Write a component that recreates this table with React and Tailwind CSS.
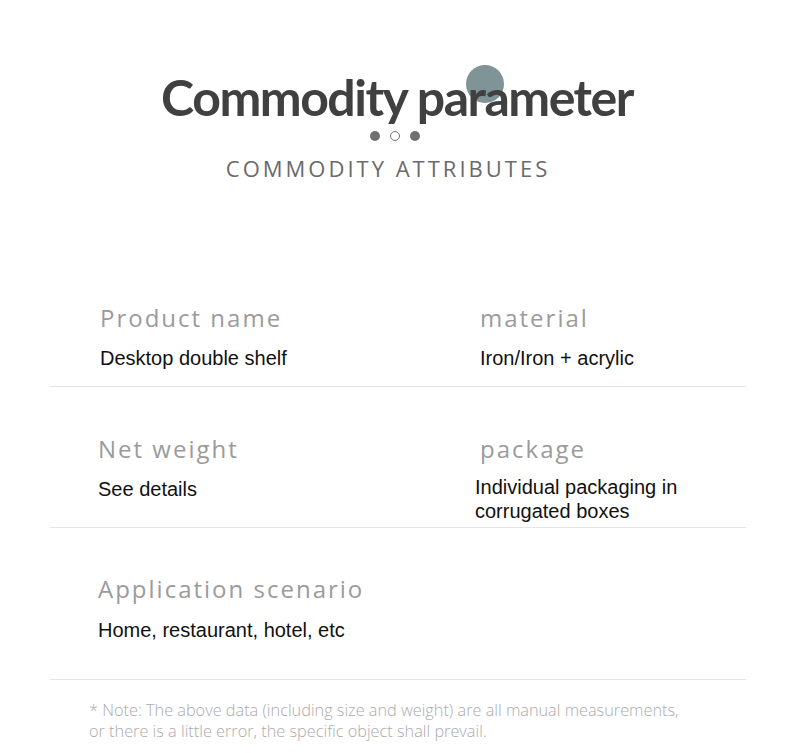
import React from 'react';

const rows = [
  {
    left: { label: 'Product name', value: ['Desktop double shelf'] },
    right: { label: 'material', value: ['Iron/Iron + acrylic'] },
    pad: 'pt-0 pb-[16px]',
    gap: 'mt-[13px]',
  },
  {
    left: { label: 'Net weight', value: ['See details'], nudge: true },
    right: { label: 'package', value: ['Individual packaging in', 'corrugated boxes'], shift: true },
    pad: 'pt-[47px] pb-[4px]',
    gap: 'mt-[13px]',
  },
  {
    left: { label: 'Application scenario', value: ['Home, restaurant, hotel, etc'], nudge: true },
    right: null,
    pad: 'pt-[46px] pb-[37px]',
    gap: 'mt-[14px]',
  },
];

function Cell({ item, gap }) {
  if (!item) return <div />;
  return (
    <div className={item.nudge ? '-ml-[2px]' : ''}>
      <div className="h-[30px] leading-[30px] text-[24px] tracking-[2px] text-[#9b9b9b] font-['Open_Sans',sans-serif]">
        {item.label}
      </div>
      <div
        className={`text-[20px] leading-[24px] text-[#111] font-['Liberation_Sans',sans-serif] ${
          item.shift ? '-ml-[5px] mt-[11px]' : gap
        }`}
      >
        {item.value.map((v) => (
          <div key={v}>{v}</div>
        ))}
      </div>
    </div>
  );
}

export default function App() {
  return (
    <div className="w-[790px] h-[753px] bg-white overflow-hidden">
      {/* Header */}
      <div className="pt-[67px] flex flex-col items-center">
        <div className="relative h-[60px] ml-[4px]">
          <div className="absolute left-[305px] top-[-2px] w-[38px] h-[38px] rounded-full bg-[#7f9497]" />
          <h1 className="relative text-[50px] leading-[60px] font-bold tracking-[-1.5px] text-[#404040] font-['Lato',sans-serif]">
            Commodity parameter
          </h1>
        </div>
        <div className="mt-[4px] flex items-center gap-[10px] h-[10px]">
          <span className="w-[10px] h-[10px] rounded-full bg-[#707070]" />
          <span className="w-[10px] h-[10px] rounded-full border border-[#707070]" />
          <span className="w-[10px] h-[10px] rounded-full bg-[#707070]" />
        </div>
        <div className="mt-[14px] mr-[14px] h-[26px] leading-[26px] text-[22px] tracking-[3px] text-[#6a6a6a] font-['Open_Sans',sans-serif]">
          COMMODITY ATTRIBUTES
        </div>
      </div>

      {/* Parameter rows */}
      <div className="mt-[122px] ml-[50px] mr-[44px]">
        {rows.map((row, i) => (
          <div key={i} className={`grid grid-cols-[380px_1fr] pl-[50px] border-b border-[#e6e6e6] ${row.pad}`}>
            <Cell item={row.left} gap={row.gap} />
            <Cell item={row.right} gap={row.gap} />
          </div>
        ))}
      </div>

      {/* Note */}
      <div className="mt-[20px] pl-[89px] text-[16.3px] leading-[21px] text-[#ababab] font-light font-['Open_Sans',sans-serif]">
        <div>* Note: The above data (including size and weight) are all manual measurements,</div>
        <div>or there is a little error, the specific object shall prevail.</div>
      </div>
    </div>
  );
}
